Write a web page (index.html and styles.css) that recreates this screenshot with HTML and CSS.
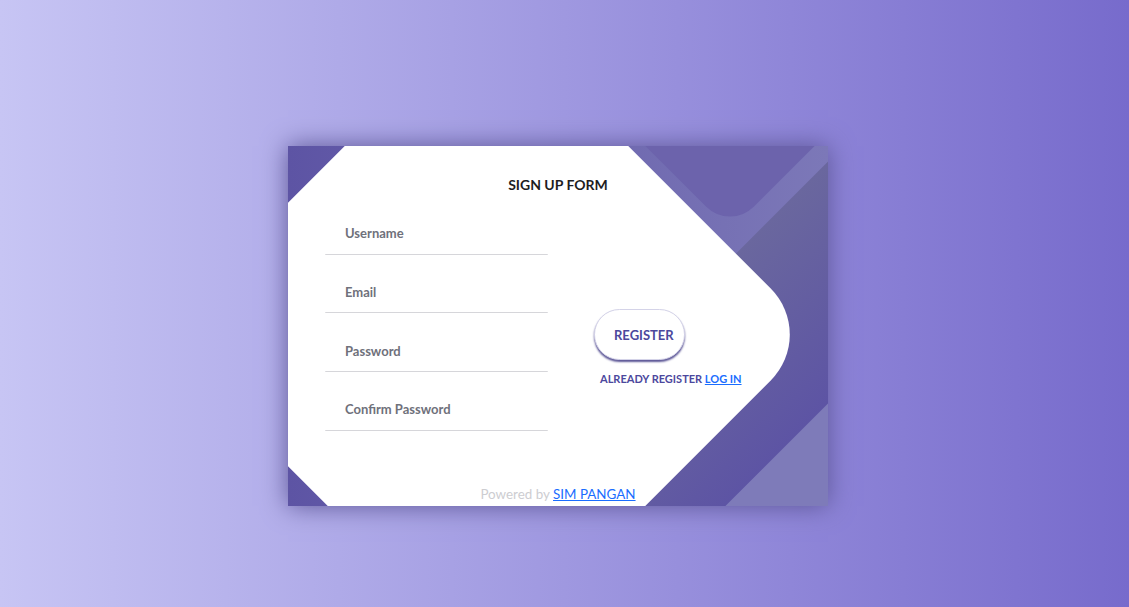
FILE: index.html
```html
<!DOCTYPE html>
<html lang="id">
<head>
  <meta charset="UTF-8">
  <meta name="viewport" content="width=device-width, initial-scale=1.0">
  <title>Sign Up - SIM PANGAN</title>
  <link rel="stylesheet" href="styles.css">
</head>

<body>
  <div class="page">
    <div class="card">
      <!-- bentuk dekorasi latar -->
      <div class="card-bg">
        <span class="shape shape4"></span>
        <span class="shape shape3"></span>
        <span class="shape shape2"></span>
        <span class="shape shape1"></span>
      </div>

      <form class="card-content" onsubmit="return false">
        <h1 class="title">SIGN UP FORM</h1>

        <div class="form-body">
          <div class="fields">
            <input class="field" type="text" id="username" placeholder="Username">
            <input class="field" type="email" id="email" placeholder="Email">
            <input class="field" type="password" id="password" placeholder="Password">
            <input class="field" type="password" id="confirm" placeholder="Confirm Password">
          </div>

          <div class="actions">
            <button class="btn-register" type="submit">REGISTER</button>
            <p class="login-note">ALREADY REGISTER <a href="#">LOG IN</a></p>
          </div>
        </div>

        <p class="powered">Powered by <a href="#">SIM PANGAN</a></p>
      </form>
    </div>
  </div>
</body>
</html>
```

FILE: styles.css
```css
* {
  box-sizing: border-box;
}

body {
  margin: 0;
  min-height: 100vh;
  font-family: Lato, "Open Sans", sans-serif;
  background: linear-gradient(90deg, #C7C5F4, #776BCC);
}

.page {
  padding: 146px 0 0 288px;
}

.card {
  position: relative;
  width: 540px;
  height: 360px;
  background: linear-gradient(90deg, #5D54A4, #7C78B8);
  box-shadow: 0 0 24px #5C5696;
  overflow: hidden;
}

/* latar dekorasi */
.card-bg {
  position: absolute;
  inset: 0;
  z-index: 0;
}

.shape {
  position: absolute;
  transform: rotate(45deg);
}

.shape1 {
  width: 467px;
  height: 467px;
  left: -35px;
  top: -45px;
  background: #fff;
  border-radius: 0 65px 0 0;
}

.shape2 {
  width: 220px;
  height: 220px;
  left: 332px;
  top: -181px;
  background: #6C63AC;
  border-radius: 34px;
}

.shape3 {
  width: 171px;
  height: 600px;
  left: 385px;
  top: -94px;
  background: linear-gradient(270deg, #5D54A4, #6A679E);
  border-radius: 32px;
}

.shape4 {
  width: 300px;
  height: 300px;
  left: 390px;
  top: 210px;
  background: #7E7BB9;
  border-radius: 40px;
}

.card-content {
  position: relative;
  z-index: 1;
  height: 100%;
  display: flex;
  flex-direction: column;
  padding: 30px 0 4px;
  margin: 0;
}

.title {
  margin: 0;
  text-align: center;
  font-size: 14px;
  line-height: 18px;
  font-weight: 700;
  color: #1d1d1f;
}

.form-body {
  display: flex;
  align-items: flex-start;
  gap: 46px;
  margin-top: 15px;
  padding-left: 37px;
}

.fields {
  display: flex;
  flex-direction: column;
  gap: 13.3px;
  width: 223px;
}

.field {
  width: 100%;
  border: none;
  border-bottom: 1.5px solid #d6d6da;
  border-radius: 1px;
  background: none;
  padding: 16px 20px 12.5px;
  font-family: inherit;
  font-size: 13px;
  line-height: 16px;
  font-weight: 700;
  color: #4a4a55;
  outline: none;
}

.field::placeholder {
  color: #6f717b;
}

.actions {
  padding-top: 100px;
}

.btn-register {
  width: 91px;
  height: 51px;
  padding: 0 11px 0 19px;
  background: #fff;
  border: 1px solid #D4D3E8;
  border-radius: 26px;
  box-shadow: 0 2px 2px #5C5696;
  font-family: inherit;
  font-size: 13px;
  font-weight: 700;
  color: #4C489D;
  text-align: left;
  cursor: pointer;
}

.login-note {
  margin: 12px 0 0 6px;
  font-size: 11px;
  line-height: 14px;
  font-weight: 700;
  color: #4C489D;
  white-space: nowrap;
}

.login-note a,
.powered a {
  color: #1a6dff;
}

.powered {
  margin: auto 0 0;
  text-align: center;
  font-size: 13.4px;
  line-height: 16px;
  color: #cdcdd1;
}
```
